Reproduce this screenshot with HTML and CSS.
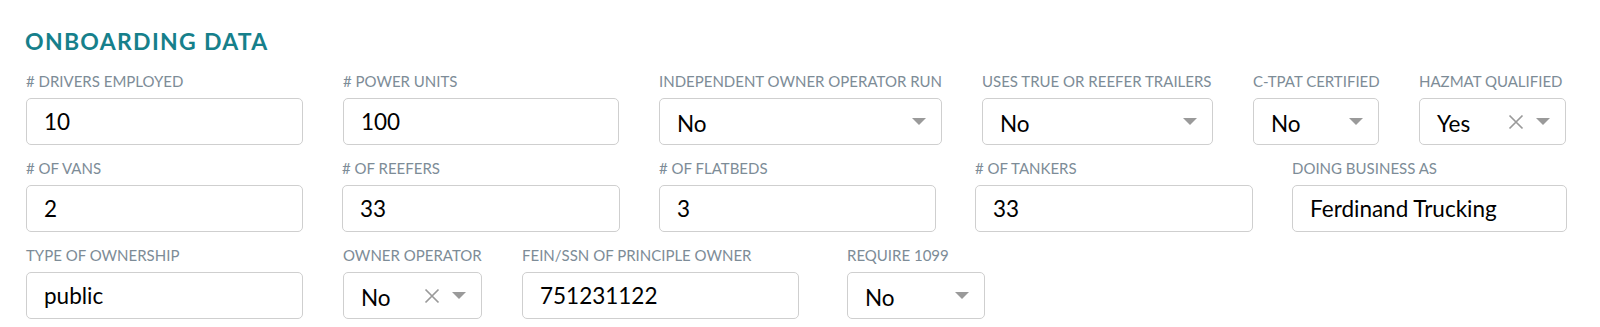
FILE: index.html
```html
<!DOCTYPE html>
<html lang="en">
<head>
<meta charset="utf-8">
<title>Onboarding Data</title>
<link rel="stylesheet" href="styles.css">
</head>
<body>
<section class="panel">
  <h2 class="title">Onboarding Data</h2>

  <div class="row">
    <div class="field w-277">
      <label class="label"># Drivers Employed</label>
      <div class="control">10</div>
    </div>
    <div class="field w-276">
      <label class="label"># Power Units</label>
      <div class="control">100</div>
    </div>
    <div class="field w-283">
      <label class="label">Independent Owner Operator Run</label>
      <div class="control select"><span class="value">No</span><span class="arrow"></span></div>
    </div>
    <div class="field w-231">
      <label class="label">Uses True or Reefer Trailers</label>
      <div class="control select"><span class="value">No</span><span class="arrow"></span></div>
    </div>
    <div class="field w-126">
      <label class="label">C-TPAT Certified</label>
      <div class="control select"><span class="value">No</span><span class="arrow"></span></div>
    </div>
    <div class="field w-147">
      <label class="label">Hazmat Qualified</label>
      <div class="control select"><span class="value">Yes</span>
        <svg class="clear" viewBox="0 0 18 18" width="18" height="18"><path d="M2.5 2.5 L15.5 15.5 M15.5 2.5 L2.5 15.5" stroke="#9a9a9a" stroke-width="1.7" fill="none"/></svg>
        <span class="arrow"></span></div>
    </div>
  </div>

  <div class="row row-tight">
    <div class="field w-277">
      <label class="label"># of Vans</label>
      <div class="control">2</div>
    </div>
    <div class="field w-278">
      <label class="label"># of Reefers</label>
      <div class="control">33</div>
    </div>
    <div class="field w-277">
      <label class="label"># of Flatbeds</label>
      <div class="control">3</div>
    </div>
    <div class="field w-278">
      <label class="label"># of Tankers</label>
      <div class="control">33</div>
    </div>
    <div class="field w-275">
      <label class="label">Doing Business As</label>
      <div class="control">Ferdinand Trucking</div>
    </div>
  </div>

  <div class="row">
    <div class="field w-277">
      <label class="label">Type of Ownership</label>
      <div class="control">public</div>
    </div>
    <div class="field w-139">
      <label class="label">Owner Operator</label>
      <div class="control select"><span class="value">No</span>
        <svg class="clear" viewBox="0 0 18 18" width="18" height="18"><path d="M2.5 2.5 L15.5 15.5 M15.5 2.5 L2.5 15.5" stroke="#9a9a9a" stroke-width="1.7" fill="none"/></svg>
        <span class="arrow"></span></div>
    </div>
    <div class="field w-277">
      <label class="label">FEIN/SSN of Principle Owner</label>
      <div class="control">751231122</div>
    </div>
    <div class="field w-138 push">
      <label class="label">Require 1099</label>
      <div class="control select"><span class="value">No</span><span class="arrow"></span></div>
    </div>
  </div>
</section>
</body>
</html>
```

FILE: styles.css
```css
* { box-sizing: border-box; }

body {
  margin: 0;
  background: #ffffff;
  font-family: Lato, "Open Sans", "Liberation Sans", sans-serif;
  color: #000;
}

.panel {
  padding: 28px 24px 0 26px;
}

.title {
  margin: 0 0 18px -1px;
  font-size: 23px;
  line-height: 26px;
  font-weight: 700;
  letter-spacing: 1.3px;
  text-transform: uppercase;
  color: #16808b;
}

.row {
  display: flex;
  gap: 40px;
  margin-bottom: 14px;
}

.row-tight {
  gap: 39px;
}

.field {
  display: flex;
  flex-direction: column;
  flex: none;
}

.label {
  display: block;
  font-size: 15px;
  line-height: 18px;
  height: 16px;
  margin-bottom: 10px;
  color: #7d8c97;
  text-transform: uppercase;
  white-space: nowrap;
}

.control {
  height: 47px;
  border: 1px solid #cfcfcf;
  border-radius: 5px;
  padding: 0 15px 0 17px;
  display: flex;
  align-items: center;
  font-size: 22.5px;
  background: #fff;
  white-space: nowrap;
}

.select .value {
  flex: 1;
  padding-top: 4px;
}

.clear {
  flex: none;
  margin-right: 11px;
}

.arrow {
  flex: none;
  width: 0;
  height: 0;
  border-left: 7.5px solid transparent;
  border-right: 7.5px solid transparent;
  border-top: 7.5px solid #9a9a9a;
}

.w-277 { width: 277px; }
.w-276 { width: 276px; }
.w-278 { width: 278px; }
.w-275 { width: 275px; }
.w-283 { width: 283px; }
.w-231 { width: 231px; }
.w-126 { width: 126px; }
.w-147 { width: 147px; }
.w-139 { width: 139px; }
.w-138 { width: 138px; }
.push { margin-left: 8px; }
```
